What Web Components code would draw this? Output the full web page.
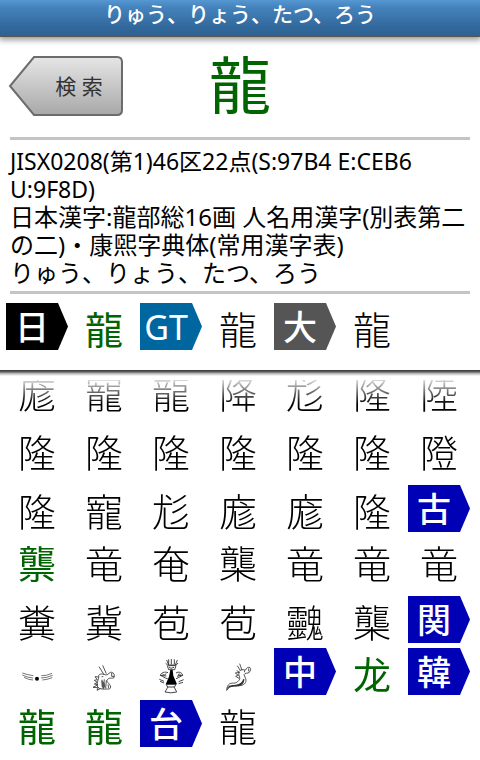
<!DOCTYPE html>
<html lang="ja">
<head>
<meta charset="utf-8">
<meta name="viewport" content="width=device-width, initial-scale=1">
<title>龍</title>
<style>
  html, body { height: 100%; }
  body {
    margin: 0;
    background: #fff;
    color: #000;
    font-family: "Noto Sans", "Noto Sans CJK JP", sans-serif;
  }
</style>
</head>
<body>

<kanji-app>
  <title-bar slot="title">りゅう、りょう、たつ、ろう</title-bar>
  <back-button slot="nav">検 索</back-button>
  <span slot="kanji">龍</span>
  <kanji-info slot="info">
    <p class="codes">JISX0208(第1)46区22点(S:97B4 E:CEB6 U:9F8D)</p>
    <p>日本漢字:龍部総16画 人名用漢字(別表第二の二)・康煕字典体(常用漢字表)<br>りゅう、りょう、たつ、ろう</p>
  </kanji-info>
  <glyph-grid slot="current" id="current"></glyph-grid>
  <glyph-grid slot="variants" id="variants"></glyph-grid>
</kanji-app>

<script>
const BADGE_COLORS = {
  "日": "#000000",
  "GT": "#0066a0",
  "大": "#555555",
  default: "#0000b4",
};

// old inscription forms, they have no code point
const DRAWINGS = {
  scales: `<svg viewBox="51 3 120 120" aria-hidden="true">
    <path d="M67 60l17 5 16 3M67 66l15 6 17 3M72 73l14 6 13 2M124 68l15-1 17-6M123 75l17-2 18-6M127 81l14-2 16-5" fill="none" stroke="#333" stroke-width="2"/>
    <circle cx="111" cy="77" r="6"/></svg>`,
  head: `<svg viewBox="252 3 120 120" aria-hidden="true">
    <g fill="none" stroke="#333" stroke-width="2.5">
    <path d="M297 41l15 24M308 37l11 25M296 67c5-7 16-3 22-1 7 0 12-11 17-8 8 2 9 8 7 16-8 4-13-2-20 6-5 5 5 10 9 18 3 7-1 11-8 10-10 0-25 2-30-6-6-12 5-22 3-35z"/>
    <path d="M335 60v10h8M296 72l-11-1 7 9-9 2 9 6-9 5 11 2-15 8 15 1-3 8 10-5M305 71h5M306 80l3 27M313 79l-3 28M319 82l-2 24M324 94l2 11"/></g>
    <path d="M304 82l10 8 2 14-11-3z" fill="#555"/></svg>`,
  figure: `<svg viewBox="453 3 120 120" aria-hidden="true">
    <g fill="none" stroke="#222" stroke-width="2.5">
    <path d="M500 21l6 15h20l6-15M506 19v15M514 18v16M523 19v15M497 31l8 7h22l7-8M502 38l4 12h18l4-12M507 43l6 3 9-3"/>
    <path d="M504 59c-9-4-21 0-23 8 9 3 13 9 22 10M481 67l18 2M528 60c9-6 19 0 20 7-6 3-11 7-20 10M548 66l-17 4M487 62l5 5 7-5M538 61l-3 6 8-1"/>
    <path d="M480 85l12 5M478 79l14 6M551 80l-15 6M549 88l-13 4M499 94h29l-5 9 7 14q-17 5-35 0l8-14zM501 102h23"/></g>
    <path d="M511 51h7l2 17 11 26h-34l10-23z"/></svg>`,
  serpent: `<svg viewBox="654 3 120 120" aria-hidden="true">
    <g fill="none" stroke="#333" stroke-width="2.5">
    <path d="M712 38l9 15M719 32l7 20M719 54c8-8 13-2 18-3 2-7 8-10 13-7 5 4 0 9-2 14-5 4-13 1-16 7l5 12c4 13-6 20-18 21-13 1-25-1-34 8l-5 6 2-11c8-18 20-5 31-15 14-12 0-16 4-27M710 53l9 5-13 2 9 7-8 3 10 6"/>
    <path d="M746 46v9M733 52l1 6"/></g>
    <path d="M679 110c8-17 14-13 27-15 14-1 22-8 23-17l4 1q1 14-14 20c-15 3-30-1-40 11z" fill="#333"/></svg>`,
};

const CURRENT = [
  "#日", "*龍", "#GT", "龍", "#大", "龍",
];

// "#" is a badge, "*" a highlighted glyph, "@" a drawing
const VARIANTS = [
  ["庬", "寵", "龍", "降", "尨", "隆", "陸"],
  ["隆", "隆", "隆", "隆", "隆", "隆", "隥"],
  ["隆", "寵", "尨", "庬", "庬", "隆", "#古"],
  ["*龒", "竜", "奄", "㰍", "竜", "竜", "竜"],
  ["糞", "冀", "苞", "苞", "䰱", "㰍", "#関"],
  ["@scales", "@head", "@figure", "@serpent", "#中", "*龙", "#韓"],
  ["*龍", "*龍", "#台", "龍"],
].flat();

class TitleBar extends HTMLElement {
  constructor() {
    super();
    this.attachShadow({ mode: "open" }).innerHTML = `
      <style>
        :host {
          display: block;
          height: 36px;
          border-bottom: 1px solid #555;
          background: linear-gradient(#5698d2, #4583bd 20%, #306699 80%, #2d6294);
          box-shadow: 0 2px 6px 1px rgba(0, 0, 0, 0.4);
        }
        h1 {
          margin: 0;
          color: #fff;
          font-size: 21px;
          font-weight: 500;
          line-height: 28px;
          text-align: center;
          white-space: nowrap;
        }
      </style>
      <h1><slot></slot></h1>`;
  }
}

class BackButton extends HTMLElement {
  constructor() {
    super();
    this.attachShadow({ mode: "open" }).innerHTML = `
      <style>
        :host { display: block; }
        button {
          display: grid;
          width: 116px;
          height: 62px;
          padding: 0;
          border: 0;
          background: none;
          color: #333;
          font: inherit;
          font-size: 21px;
          line-height: 62px;
          cursor: pointer;
        }
        svg, span { grid-area: 1 / 1; }
        span { padding-left: 26px; }
      </style>
      <button type="button">
        <svg width="116" height="62" viewBox="0 0 116 62" aria-hidden="true">
          <defs>
            <linearGradient id="metal" x2="0" y2="1">
              <stop offset="0" stop-color="#e6e6e6"/>
              <stop offset="1" stop-color="#a8a8a8"/>
            </linearGradient>
          </defs>
          <path d="M26 2H109Q114 2 114 7V55Q114 60 109 60H26L2 31Z" fill="url(#metal)" stroke="#6c6c6c" stroke-width="2"/>
        </svg>
        <span><slot></slot></span>
      </button>`;
  }
}

class KanjiInfo extends HTMLElement {
  constructor() {
    super();
    this.attachShadow({ mode: "open" }).innerHTML = `
      <style>
        :host {
          display: block;
          margin: 0 10px;
          padding: 7px 0 4px;
          border: solid #c4c4c4;
          border-width: 3px 0;
          font-size: 24px;
          line-height: 28px;
        }
        ::slotted(p) { margin: 0; }
        ::slotted(.codes) { font-size: 23px; }
      </style>
      <slot></slot>`;
  }
}

class SourceBadge extends HTMLElement {
  constructor() {
    super();
    this.attachShadow({ mode: "open" }).innerHTML = `
      <style>
        :host {
          display: block;
          box-sizing: border-box;
          width: 62px;
          height: 47px;
          padding-right: 10px;
          background: var(--badge-color, #0000b4);
          clip-path: polygon(0 0, 52px 0, 100% 50%, 52px 100%, 0 100%);
          color: #fff;
          font-size: 34px;
          font-weight: 500;
          line-height: 48px;
          text-align: center;
          white-space: nowrap;
        }
        :host([latin]) { font-weight: 400; }
      </style>
      <slot></slot>`;
  }
}

class GlyphLink extends HTMLElement {
  constructor() {
    super();
    this.attachShadow({ mode: "open" }).innerHTML = `
      <style>
        :host { display: block; width: 62px; }
        a {
          display: block;
          color: inherit;
          font-size: 38px;
          font-weight: 300;
          line-height: 52px;
          text-align: center;
          text-decoration: none;
        }
        :host([marked]) a {
          color: #006400;
          font-weight: 400;
        }
        ::slotted(svg) {
          display: block;
          width: 40px;
          height: 40px;
          margin: 6px auto 0;
        }
      </style>
      <a href="#"><slot></slot></a>`;
  }
}

class GlyphGrid extends HTMLElement {
  constructor() {
    super();
    this.attachShadow({ mode: "open" }).innerHTML = `
      <style>
        :host {
          display: grid;
          grid-template-columns: repeat(7, 62px);
          grid-auto-rows: 47px;
          gap: 5px;
          padding: 0 6px;
          justify-content: start;
        }
        :host([rows]) { grid-template-rows: var(--rows); }
      </style>
      <slot></slot>`;
  }

  set items(items) {
    this.innerHTML = items.map((item) => this._cell(item)).join("");
  }

  _cell(item) {
    const kind = item[0];
    const value = item.slice(1);
    if (kind === "#") {
      const color = BADGE_COLORS[value] || BADGE_COLORS.default;
      const latin = /^[A-Z]+$/.test(value) ? "latin" : "";
      return `<source-badge ${latin} style="--badge-color:${color}">${value}</source-badge>`;
    }
    if (kind === "@") {
      return `<glyph-link>${DRAWINGS[value]}</glyph-link>`;
    }
    if (kind === "*") {
      return `<glyph-link marked>${value}</glyph-link>`;
    }
    return `<glyph-link>${item}</glyph-link>`;
  }
}

class KanjiApp extends HTMLElement {
  constructor() {
    super();
    this.attachShadow({ mode: "open" }).innerHTML = `
      <style>
        :host {
          display: flex;
          flex-direction: column;
          height: 100%;
          overflow: hidden;
        }
        .head {
          display: grid;
          grid-template-columns: 1fr auto 1fr;
          padding: 18px 8px 0;
          height: 82px;
        }
        .kanji {
          color: #006400;
          font-size: 62px;
          font-weight: 400;
          line-height: 60px;
        }
        .current {
          padding: 9px 0 20px;
        }
        .edge {
          flex: none;
          height: 6px;
          margin-bottom: 4px;
          background: linear-gradient(#333, #666 33%, #bbb 60%, #fff);
        }
        .list {
          flex: 1;
          min-height: 0;
          overflow: hidden;
          -webkit-mask-image: linear-gradient(rgba(0, 0, 0, 0.15), #000 24px);
          mask-image: linear-gradient(rgba(0, 0, 0, 0.15), #000 24px);
        }
        /* the list is scrolled a little under the top edge */
        .scrolled { margin-top: -13px; }
      </style>
      <slot name="title"></slot>
      <div class="head">
        <slot name="nav"></slot>
        <div class="kanji"><slot name="kanji"></slot></div>
      </div>
      <slot name="info"></slot>
      <div class="current"><slot name="current"></slot></div>
      <div class="edge"></div>
      <div class="list"><div class="scrolled"><slot name="variants"></slot></div></div>`;
  }
}

customElements.define("title-bar", TitleBar);
customElements.define("back-button", BackButton);
customElements.define("kanji-info", KanjiInfo);
customElements.define("source-badge", SourceBadge);
customElements.define("glyph-link", GlyphLink);
customElements.define("glyph-grid", GlyphGrid);
customElements.define("kanji-app", KanjiApp);

document.getElementById("current").items = CURRENT;

const variants = document.getElementById("variants");
variants.items = VARIANTS;
variants.setAttribute("rows", "");
// rows without a badge are a bit taller
variants.style.setProperty("--rows", "54px 54px 47px 54px");
</script>
</body>
</html>
